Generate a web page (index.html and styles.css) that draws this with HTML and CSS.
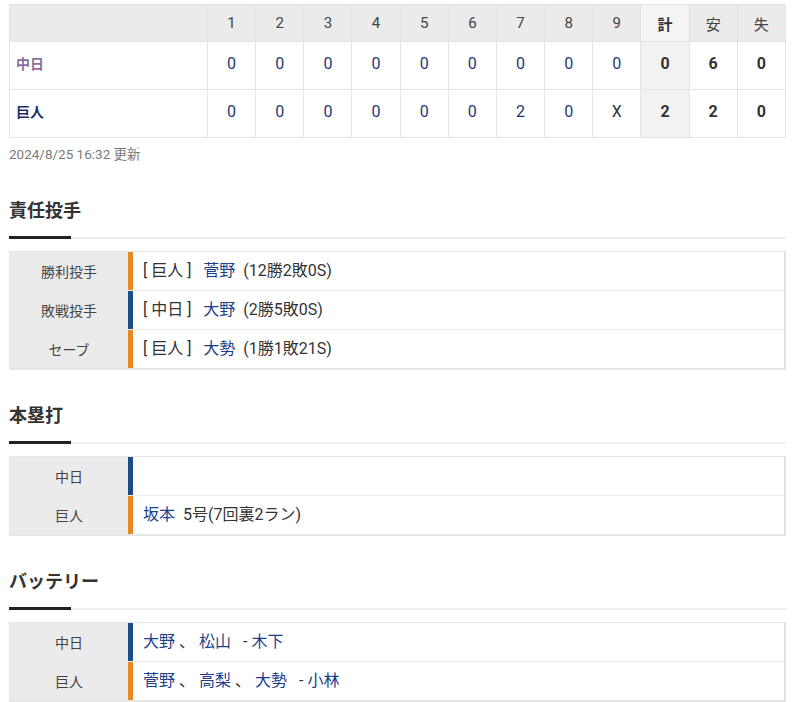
FILE: index.html
```html
<!DOCTYPE html>
<html lang="ja">
<head>
<meta charset="utf-8">
<link rel="stylesheet" href="styles.css">
</head>
<body>
<div class="page">
  <table class="score">
    <colgroup>
      <col class="c-team">
      <col><col><col><col><col><col><col><col><col><col><col><col>
    </colgroup>
    <thead>
      <tr>
        <th></th><th>1</th><th>2</th><th>3</th><th>4</th><th>5</th><th>6</th><th>7</th><th>8</th><th>9</th><th class="tot">計</th><th>安</th><th>失</th>
      </tr>
    </thead>
    <tbody>
      <tr>
        <td class="team team-d">中日</td><td>0</td><td>0</td><td>0</td><td>0</td><td>0</td><td>0</td><td>0</td><td>0</td><td>0</td><td class="tot b">0</td><td class="b">6</td><td class="b">0</td>
      </tr>
      <tr>
        <td class="team team-g">巨人</td><td>0</td><td>0</td><td>0</td><td>0</td><td>0</td><td>0</td><td>2</td><td>0</td><td class="x">X</td><td class="tot b">2</td><td class="b">2</td><td class="b">0</td>
      </tr>
    </tbody>
  </table>
  <p class="stamp">2024/8/25 16:32 更新</p>

  <section class="sec">
    <h2 class="sec-title">責任投手</h2>
    <div class="rule"><span class="rule-dark"></span></div>
    <div class="list">
      <div class="row"><div class="lab">勝利投手</div><div class="bar orange"></div><div class="val">[ 巨人 ]&nbsp;&nbsp; <a>菅野</a>&nbsp; (12勝2敗0S)</div></div>
      <div class="row"><div class="lab">敗戦投手</div><div class="bar blue"></div><div class="val">[ 中日 ]&nbsp;&nbsp; <a>大野</a>&nbsp; (2勝5敗0S)</div></div>
      <div class="row"><div class="lab">セーブ</div><div class="bar orange"></div><div class="val">[ 巨人 ]&nbsp;&nbsp; <a>大勢</a>&nbsp; (1勝1敗21S)</div></div>
    </div>
  </section>

  <section class="sec">
    <h2 class="sec-title">本塁打</h2>
    <div class="rule"><span class="rule-dark"></span></div>
    <div class="list">
      <div class="row"><div class="lab">中日</div><div class="bar blue"></div><div class="val"></div></div>
      <div class="row"><div class="lab">巨人</div><div class="bar orange"></div><div class="val"><a>坂本</a>&nbsp; 5号(7回裏2ラン)</div></div>
    </div>
  </section>

  <section class="sec">
    <h2 class="sec-title">バッテリー</h2>
    <div class="rule"><span class="rule-dark"></span></div>
    <div class="list">
      <div class="row"><div class="lab">中日</div><div class="bar blue"></div><div class="val"><a>大野</a> 、 <a>松山</a>&ensp; - <a>木下</a></div></div>
      <div class="row"><div class="lab">巨人</div><div class="bar orange"></div><div class="val"><a>菅野</a> 、 <a>高梨</a> 、 <a>大勢</a>&ensp; - <a>小林</a></div></div>
    </div>
  </section>
</div>
</body>
</html>
```

FILE: styles.css
```css
html, body {
  margin: 0;
  padding: 0;
  background: #fff;
}
body {
  font-family: Roboto, "Noto Sans CJK JP", sans-serif;
  color: #333;
}
.page {
  width: 777px;
  padding: 4px 0 0 9px;
}
.score {
  width: 777px;
  border-collapse: collapse;
  table-layout: fixed;
  border: 1px solid #e4e4e4;
}
.c-team {
  width: 198px;
}
.score th {
  height: 36px;
  background: #ebebeb;
  font-weight: 400;
  font-size: 15px;
  color: #444;
  border-left: 1px solid #e2e2e2;
  padding: 0;
}
.score th:first-child {
  border-left: none;
}
.score th.tot {
  background: #f4f4f4;
  font-weight: 700;
  color: #333;
}
.score td {
  height: 42px;
  text-align: center;
  font-size: 16px;
  color: #1e3a6e;
  border: 1px solid #e4e4e4;
  padding: 0 0 5px;
}
.score td.team {
  text-align: left;
  padding-left: 6px;
  font-weight: 700;
  font-size: 14px;
}
.team-d {
  color: #8a6f9c !important;
}
.team-g {
  color: #1c3168 !important;
}
.score td.x {
  color: #333;
}
.score td.b {
  font-weight: 700;
  color: #333;
}
.score td.tot {
  background: #f2f2f2;
}
.stamp {
  margin: 8px 0 0;
  font-size: 13.5px;
  line-height: 17px;
  color: #7a7a7a;
}
.sec {
  margin-top: 34px;
}
.stamp + .sec {
  margin-top: 36px;
}
.sec-title {
  margin: 0;
  font-size: 18px;
  line-height: 24px;
  font-weight: 700;
  color: #333;
}
.rule {
  margin-top: 14px;
  height: 2px;
  background: #eeeeee;
}
.rule-dark {
  display: block;
  width: 62px;
  height: 3px;
  background: #222;
  position: relative;
  top: -1px;
}
.list {
  margin-top: 12px;
  border: 1px solid #e6e6e6;
  border-right: 2px solid #e0e0e0;
  border-bottom: 2px solid #e6e6e6;
}
.row {
  display: flex;
  height: 38px;
  border-top: 1px solid #ececec;
}
.row:first-child {
  border-top: none;
}
.lab {
  width: 118px;
  background: #ebebeb;
  display: flex;
  align-items: center;
  justify-content: center;
  font-size: 14px;
  color: #444;
}
.bar {
  width: 5px;
}
.orange {
  background: #e38b20;
}
.blue {
  background: #1b4c87;
}
.val {
  flex: 1;
  padding-left: 10px;
  font-size: 16px;
  line-height: 38px;
  color: #333;
  white-space: pre;
}
.val a {
  color: #1d3f8a;
  text-decoration: none;
}
```
